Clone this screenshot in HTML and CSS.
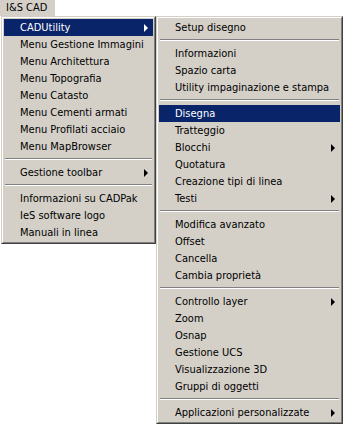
FILE: index.html
```html
<!DOCTYPE html>
<html lang="it">
<head>
    <meta charset="UTF-8">
    <title>I&amp;S CAD</title>
    <link rel="stylesheet" href="styles.css">
</head>
<body>
    <div class="menubar">
        <div class="menubar-item">I&amp;S CAD</div>
    </div>

    <div class="menus">
        <div class="menu menu-main">
            <div class="menu-inner">
                <div class="item active has-sub">CADUtility</div>
                <div class="item">Menu Gestione Immagini</div>
                <div class="item">Menu Architettura</div>
                <div class="item">Menu Topografia</div>
                <div class="item">Menu Catasto</div>
                <div class="item">Menu Cementi armati</div>
                <div class="item">Menu Profilati acciaio</div>
                <div class="item">Menu MapBrowser</div>
                <div class="sep"></div>
                <div class="item has-sub">Gestione toolbar</div>
                <div class="sep"></div>
                <div class="item">Informazioni su CADPak</div>
                <div class="item">IeS software logo</div>
                <div class="item">Manuali in linea</div>
            </div>
        </div>

        <div class="menu menu-sub">
            <div class="menu-inner">
                <div class="item">Setup disegno</div>
                <div class="sep"></div>
                <div class="item">Informazioni</div>
                <div class="item">Spazio carta</div>
                <div class="item">Utility impaginazione e stampa</div>
                <div class="sep"></div>
                <div class="item active">Disegna</div>
                <div class="item">Tratteggio</div>
                <div class="item has-sub">Blocchi</div>
                <div class="item">Quotatura</div>
                <div class="item">Creazione tipi di linea</div>
                <div class="item has-sub">Testi</div>
                <div class="sep"></div>
                <div class="item">Modifica avanzato</div>
                <div class="item">Offset</div>
                <div class="item">Cancella</div>
                <div class="item">Cambia proprietà</div>
                <div class="sep"></div>
                <div class="item has-sub">Controllo layer</div>
                <div class="item">Zoom</div>
                <div class="item">Osnap</div>
                <div class="item">Gestione UCS</div>
                <div class="item">Visualizzazione 3D</div>
                <div class="item">Gruppi di oggetti</div>
                <div class="sep"></div>
                <div class="item has-sub">Applicazioni personalizzate</div>
            </div>
        </div>
    </div>
</body>
</html>
```

FILE: styles.css
```css
body {
    margin: 0;
    background-color: #fff;
    font-family: Tahoma, "DejaVu Sans Condensed", "Liberation Sans", sans-serif;
    font-size: 11px;
    color: #000;
}
.menubar {
    display: flex;
    height: 16px;
}
.menubar-item {
    width: 49px;
    padding-left: 6px;
    line-height: 16px;
    background-color: #d4d0c8;
}
.menus {
    display: flex;
    align-items: flex-start;
    padding-left: 1px;
}
.menu {
    background-color: #d4d0c8;
    border: 1px solid;
    border-color: #d4d0c8 #404040 #404040 #d4d0c8;
}
.menu-inner {
    border: 1px solid;
    border-color: #fff #808080 #808080 #fff;
    padding: 1px;
}
.menu-main {
    width: 153px;
}
.menu-sub {
    width: 185px;
}
.item {
    position: relative;
    height: 17px;
    line-height: 17px;
    padding-left: 16px;
    white-space: nowrap;
}
.item.active {
    background-color: #0a246a;
    color: #fff;
}
.has-sub::after {
    content: "";
    position: absolute;
    right: 5px;
    top: 5px;
    border-style: solid;
    border-width: 4px 0 4px 4px;
    border-color: transparent transparent transparent #000;
}
.active.has-sub::after {
    border-left-color: #fff;
}
.sep {
    height: 9px;
    margin: 0 1px;
    box-sizing: border-box;
    padding-top: 3px;
}
.sep::before {
    content: "";
    display: block;
    border-top: 1px solid #808080;
    border-bottom: 1px solid #fff;
}
```
